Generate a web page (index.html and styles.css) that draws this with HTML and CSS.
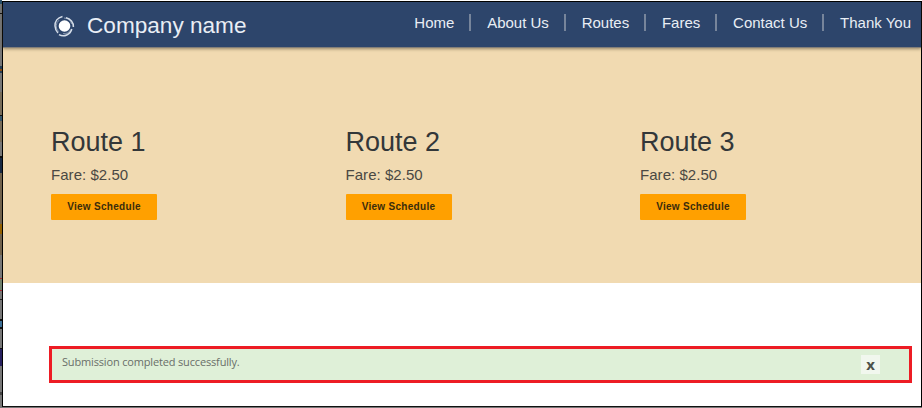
FILE: index.html
```
<!DOCTYPE html>
<html lang="en">
<head>
<meta charset="utf-8">
<title>Company name</title>
<link rel="stylesheet" href="styles.css">
</head>
<body>
<div class="backdrop"></div>
<div class="window">
  <header class="navbar">
    <a class="brand">
      <svg class="logo" viewBox="0 0 22 22">
        <circle cx="11.5" cy="11" r="5.8" fill="#fff"/>
        <path d="M9.5 1.4C4.500 2.500 1.800 6.500 2 11C2.200 14 3.200 16.200 5 18" />
        <path d="M13 2.8A8.8 8.800 0 0 1 20.400 12" />
        <path d="M18.800 14A8.800 8.800 0 0 1 6 19.600" />
        <path class="thin" d="M5.600 16.600A7.600 7.600 0 0 1 6 5.200M11 3A8 8 0 0 1 18.600 9M17.800 14.400A7.600 7.600 0 0 1 10 18.600" />
      </svg>
      <span class="name">Company name</span>
    </a>
    <nav class="menu">
      <a>Home</a>
      <a>About Us</a>
      <a>Routes</a>
      <a>Fares</a>
      <a>Contact Us</a>
      <a class="last">Thank You</a>
    </nav>
  </header>
  <section class="routes">
    <article class="route"><h2>Route 1</h2><p>Fare: $2.50</p><button>View Schedule</button></article>
    <article class="route"><h2>Route 2</h2><p>Fare: $2.50</p><button>View Schedule</button></article>
    <article class="route"><h2>Route 3</h2><p>Fare: $2.50</p><button>View Schedule</button></article>
  </section>
  <div class="alert"><span class="message">Submission completed successfully.</span><button class="close">x</button></div>
</div>
</body>
</html>
```
FILE: styles.css
```
* { box-sizing: border-box; }
body {
  margin: 0;
  width: 922px;
  height: 408px;
  display: flex;
  overflow: hidden;
  background: #fff;
  font-family: "Liberation Sans", Arial, sans-serif;
}
.backdrop {
  width: 2px;
  flex: none;
  background: linear-gradient(
    #29506b 0 4px, #777 4px 13px, #111 13px 14px, #777 14px 66px,
    #263f55 66px 69px, #8a4b12 69px 71px, #263f55 71px 73px, #777 73px 92px,
    #786c59 92px 115px, #111 115px 116px, #36566a 116px 121px, #786c59 121px 142px, #777 142px 156px,
    #111 156px 158px, #182943 158px 173px, #71624c 173px 224px, #936000 224px 234px,
    #71624c 234px 255px, #777 255px 278px, #a32a32 278px 279px, #70806c 279px 290px,
    #a32a32 290px 291px, #777 291px 299px, #222 299px 300px, #777 300px 319px,
    #111 319px 321px, #3c6f96 321px 327px, #111 327px 329px, #777 329px 348px,
    #111 348px 349px, #27205f 349px 366px, #777 366px 392px, #444 392px 395px, #777 395px);
}
.window {
  width: 920px;
  flex: none;
  height: 406px;
  margin-top: 1px;
  border: 1px solid #000;
  border-bottom-color: #111;
  box-shadow: 0 1px #777;
}
.navbar {
  height: 45px;
  padding-left: 50px;
  display: flex;
  align-items: flex-start;
  justify-content: space-between;
  background: #2d456b;
  color: #e9eef5;
  position: relative;
  box-shadow: 0 1px #847f78, 0 2px 3px rgba(60, 50, 30, .5);
}
.brand { display: flex; align-items: center; height: 48px; }
.logo { width: 22px; height: 22px; fill: none; stroke: #d5dde8; stroke-width: 1.5; }
.logo circle { stroke: none; }
.logo .thin { stroke-width: .9; opacity: .6; }
.name { margin-left: 12px; font-size: 22.6px; white-space: nowrap; }
.menu { display: flex; margin: 12px 10px 0 0; font-size: 15px; line-height: 17px; white-space: nowrap; }
.menu a { padding: 0 15px 0 0; margin-right: 15.8px; border-right: 2px solid #77859b; }
.menu .last { padding: 0; margin: 0; border: 0; }
.routes {
  height: 236px;
  padding: 78px 0 0 48px;
  display: grid;
  grid-template-columns: 294.5px 294.5px 1fr;
  align-content: start;
  background: #f1dab1;
  overflow: hidden;
}
.route h2 { margin: 0; font-size: 27px; line-height: 34px; font-weight: 400; color: #333739; }
.route p { margin: 7px 0 10px; font-size: 15px; line-height: 18px; letter-spacing: .05px; color: #4a4843; }
.route button {
  display: block;
  width: 106px;
  height: 26px;
  padding: 0 0 1px;
  border: 0;
  border-radius: 1px;
  background: #ffa000;
  color: #3a2c0c;
  font: bold 10px "Liberation Sans", Arial, sans-serif;
  letter-spacing: .3px;
}
.alert {
  width: 863px;
  height: 37px;
  margin: 63px 0 0 46px;
  padding: 0 29px 0 10px;
  display: flex;
  justify-content: space-between;
  align-items: flex-start;
  border: 3px solid #ed1c24;
  background: #dff0d8;
  color: #696e68;
}
.message { margin-top: 5px; font: 11px/16px "Open Sans", sans-serif; letter-spacing: -.16px; }
.close {
  width: 19px;
  height: 19px;
  margin-top: 6px;
  padding: 0 0 1px;
  border: 0;
  background: #f1f7ee;
  color: #4d524b;
  font: bold 15px/18px "Open Sans", sans-serif;
}
```
